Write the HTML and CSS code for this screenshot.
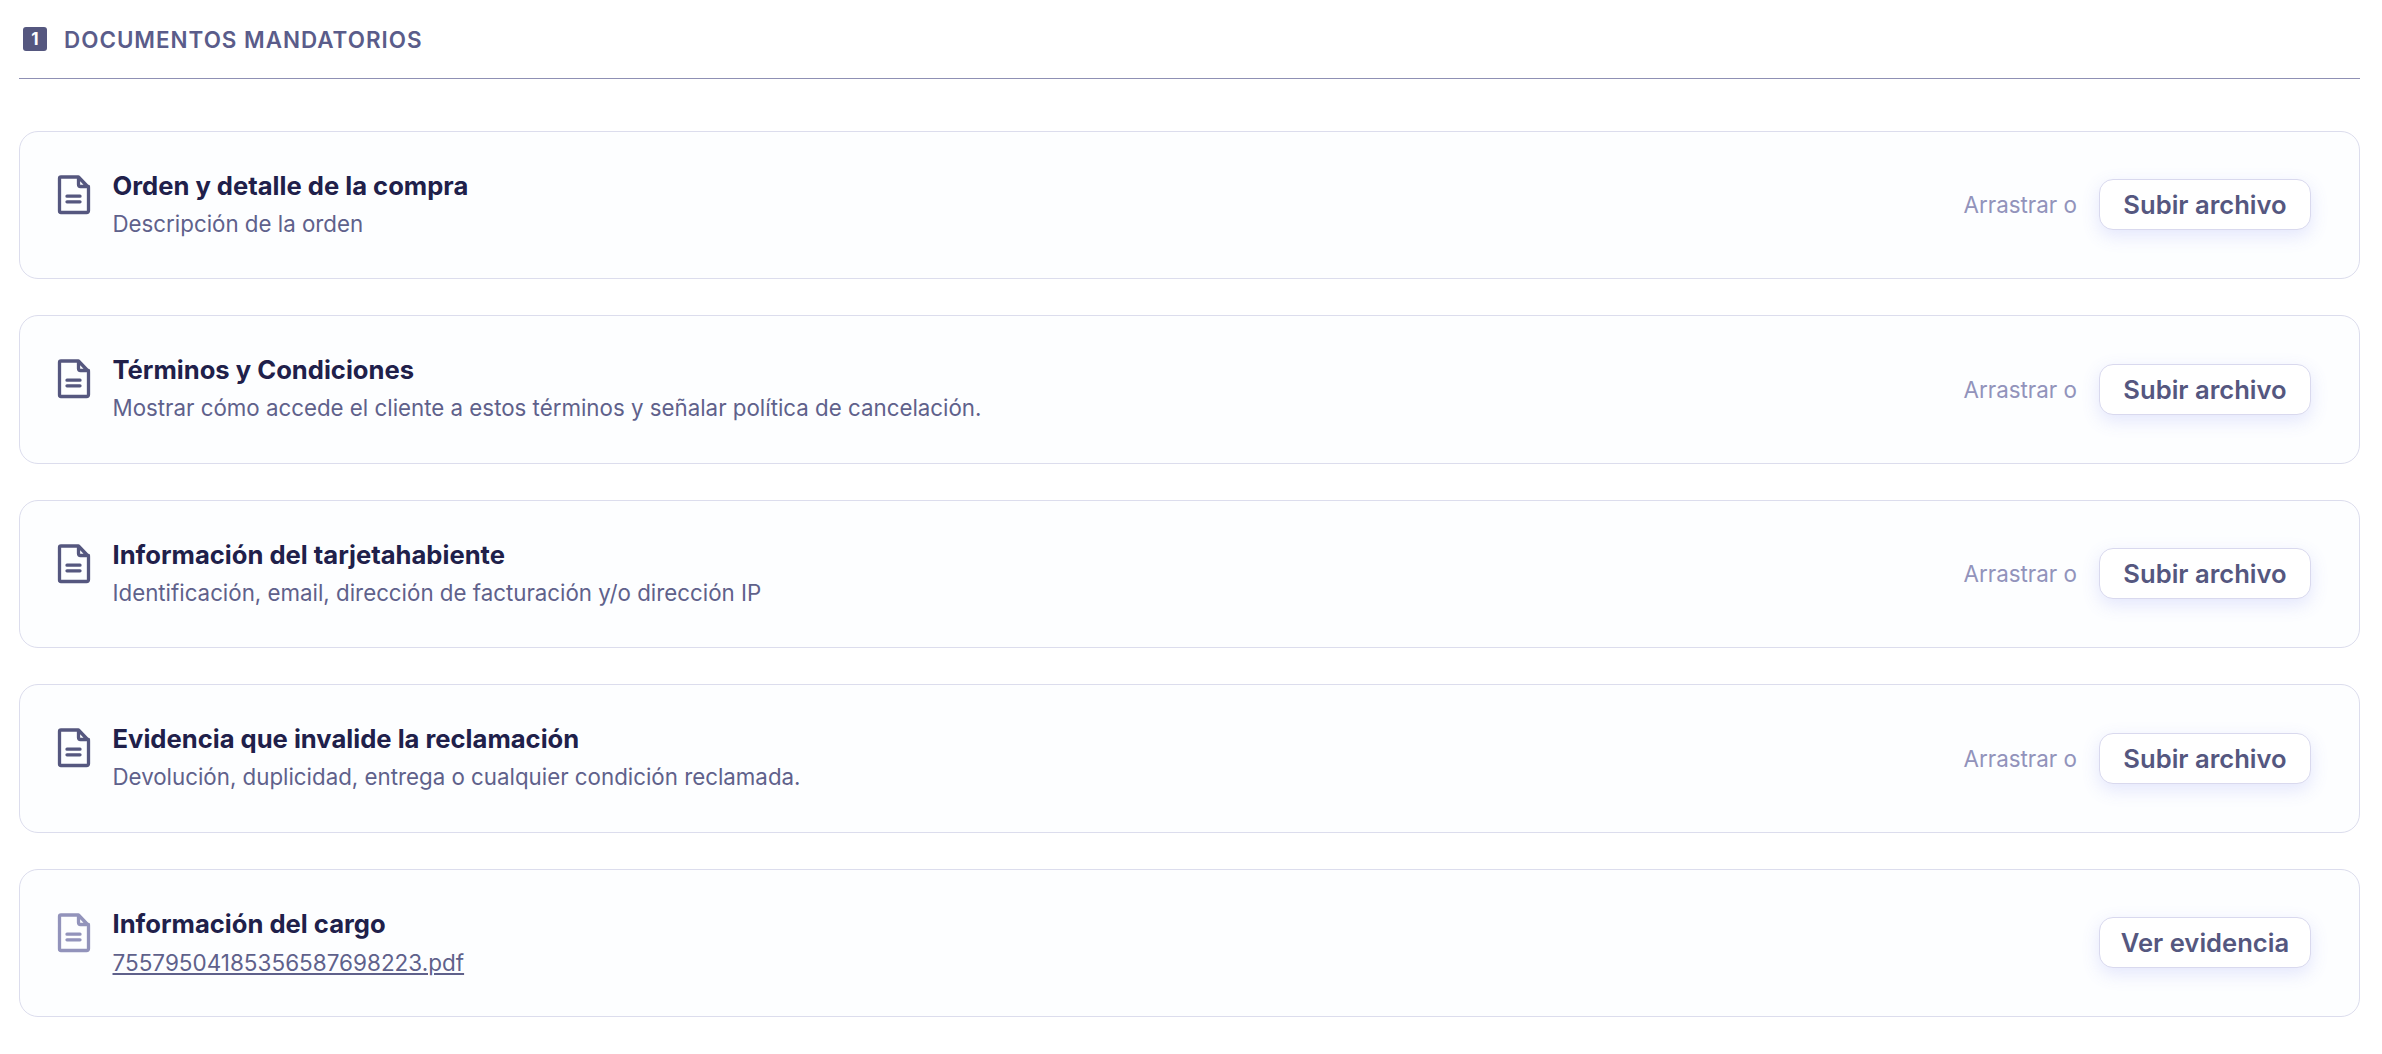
FILE: index.html
```html
<!DOCTYPE html>
<html lang="es">
<head>
<meta charset="utf-8">
<title>Documentos mandatorios</title>
<link rel="stylesheet" href="styles.css">
</head>
<body>
<section class="section">
  <header class="section-head">
    <span class="badge">1</span>
    <h2 class="section-title">Documentos mandatorios</h2>
  </header>
  <div class="list">
    <article class="card">
      <svg class="doc-icon" viewBox="0 0 36 42"><path d="M5 3H22.500L32.500 13.500V36.500a2 2 0 0 1-2 2H5a1.500 1.500 0 0 1-1.500-1.500V4.500A1.500 1.500 0 0 1 5 3Z M22.500 3V10.500a2 2 0 0 0 2 2H32.500 M11 22.200H24 M11 27.800H24"/></svg>
      <div class="text">
        <h3 class="title">Orden y detalle de la compra</h3>
        <p class="desc">Descripción de la orden</p>
      </div>
      <div class="actions"><span class="drag">Arrastrar o</span><button class="btn">Subir archivo</button></div>
    </article>
    <article class="card">
      <svg class="doc-icon" viewBox="0 0 36 42"><path d="M5 3H22.500L32.500 13.500V36.500a2 2 0 0 1-2 2H5a1.500 1.500 0 0 1-1.500-1.500V4.500A1.500 1.500 0 0 1 5 3Z M22.500 3V10.500a2 2 0 0 0 2 2H32.500 M11 22.200H24 M11 27.800H24"/></svg>
      <div class="text">
        <h3 class="title">Términos y Condiciones</h3>
        <p class="desc">Mostrar cómo accede el cliente a estos términos y señalar política de cancelación.</p>
      </div>
      <div class="actions"><span class="drag">Arrastrar o</span><button class="btn">Subir archivo</button></div>
    </article>
    <article class="card">
      <svg class="doc-icon" viewBox="0 0 36 42"><path d="M5 3H22.500L32.500 13.500V36.500a2 2 0 0 1-2 2H5a1.500 1.500 0 0 1-1.500-1.500V4.500A1.500 1.500 0 0 1 5 3Z M22.500 3V10.500a2 2 0 0 0 2 2H32.500 M11 22.200H24 M11 27.800H24"/></svg>
      <div class="text">
        <h3 class="title">Información del tarjetahabiente</h3>
        <p class="desc">Identificación, email, dirección de facturación y/o dirección IP</p>
      </div>
      <div class="actions"><span class="drag">Arrastrar o</span><button class="btn">Subir archivo</button></div>
    </article>
    <article class="card">
      <svg class="doc-icon" viewBox="0 0 36 42"><path d="M5 3H22.500L32.500 13.500V36.500a2 2 0 0 1-2 2H5a1.500 1.500 0 0 1-1.500-1.500V4.500A1.500 1.500 0 0 1 5 3Z M22.500 3V10.500a2 2 0 0 0 2 2H32.500 M11 22.200H24 M11 27.800H24"/></svg>
      <div class="text">
        <h3 class="title">Evidencia que invalide la reclamación</h3>
        <p class="desc">Devolución, duplicidad, entrega o cualquier condición reclamada.</p>
      </div>
      <div class="actions"><span class="drag">Arrastrar o</span><button class="btn">Subir archivo</button></div>
    </article>
    <article class="card">
      <svg class="doc-icon doc-icon-done" viewBox="0 0 36 42"><path d="M5 3H22.500L32.500 13.500V36.500a2 2 0 0 1-2 2H5a1.500 1.500 0 0 1-1.500-1.500V4.500A1.500 1.500 0 0 1 5 3Z M22.500 3V10.500a2 2 0 0 0 2 2H32.500 M11 22.200H24 M11 27.800H24"/></svg>
      <div class="text">
        <h3 class="title">Información del cargo</h3>
        <a class="file" href="#">75579504185356587698223.pdf</a>
      </div>
      <div class="actions"><button class="btn">Ver evidencia</button></div>
    </article>
  </div>
</section>
</body>
</html>
```
FILE: styles.css
```css
* { box-sizing: border-box; }
html, body { margin: 0; background: #ffffff; }
body { font-family: Inter, "Liberation Sans", sans-serif; color: #1e1e45; padding: 0 22px 0 19px; }
.section-head {
  display: flex; align-items: center; gap: 17px;
  height: 78.5px; padding-left: 4px; padding-top: 1px;
  border-bottom: 1.5px solid #8f90b4;
}
.badge {
  width: 24px; height: 24px; border-radius: 3px; background: #55577f; color: #fff;
  font-size: 17px; font-weight: 700; line-height: 24px; text-align: center;
}
.section-title {
  margin: 0; font-size: 22.4px; font-weight: 600; letter-spacing: 1px;
  text-transform: uppercase; color: #5a5c8a;
}
.list { display: flex; flex-direction: column; gap: 36px; padding-top: 52px; }
.card {
  display: flex; align-items: flex-start; height: 148.5px;
  padding: 36px 48px 0 36px; background: #fdfeff;
  border: 1.5px solid #dcdded; border-radius: 19px;
}
.doc-icon {
  width: 36px; height: 42px; flex: none; margin: 6px 20.5px 0 0;
  fill: none; stroke: #55577f; stroke-width: 3.3; stroke-linejoin: round; stroke-linecap: round;
}
.doc-icon-done { stroke: #9293bb; }
.text { flex: 1; min-width: 0; }
.title { margin: 0; font-size: 25.6px; line-height: 36px; font-weight: 700; color: #20204a; }
.desc { margin: 4px 0 0; font-size: 22.3px; line-height: 32px; color: #5f618b; }
.file { display: block; margin-top: 5.5px; font-size: 22.5px; line-height: 32px; color: #5f618b; }
.actions { display: flex; align-items: center; gap: 22px; margin-top: 11.5px; }
.drag { font-size: 22.4px; color: #9293bb; }
.btn {
  width: 212px; height: 51px; padding: 0; font: 600 25.6px Inter, sans-serif; color: #55577f;
  background: #fff; border: 1.5px solid #d9d9ee; border-radius: 14px;
  box-shadow: 0 6px 18px rgba(95, 105, 235, 0.16);
}
```
